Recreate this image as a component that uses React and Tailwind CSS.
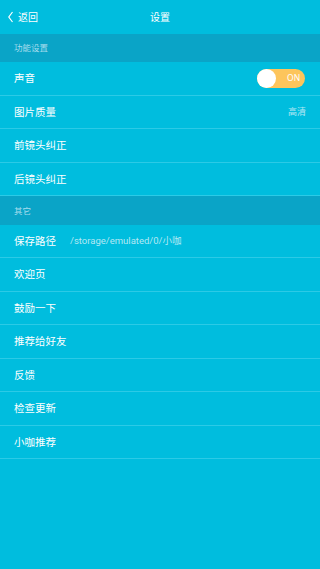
import React from "react";

const font = { fontFamily: '"Noto Sans CJK SC", "Noto Sans", sans-serif' };

function Row({ label, right, children }) {
  return (
    <div className="flex h-[33.5px] items-center border-b border-[#2ccae6] pl-[14px] pr-[14px]">
      <span className="text-[10.5px] text-white">{label}</span>
      {children}
      {right}
    </div>
  );
}

function Section({ title }) {
  return (
    <div className="flex h-[28.5px] items-center bg-[#0aa4c7] pl-[14px] text-[8.5px] text-[#a6dced]">
      {title}
    </div>
  );
}

export default function App() {
  return (
    <div className="h-[569px] w-[320px] bg-[#00bdde]" style={font}>
      <div className="relative flex h-[33.5px] items-center">
        <div className="flex items-center pl-[7px]">
          <svg width="8" height="12" viewBox="0 0 8 12" className="mt-[1px]">
            <path d="M5.5 1 L1.8 6 L5.5 11" fill="none" stroke="white" strokeWidth="1.2" />
          </svg>
          <span className="ml-[3px] text-[10px] text-white">返回</span>
        </div>
        <div className="absolute left-0 right-0 text-center text-[10px] text-white pointer-events-none">设置</div>
      </div>
      <Section title="功能设置" />
      <Row
        label="声音"
        right={
          <div className="ml-auto flex h-[19px] w-[48px] items-center rounded-full bg-[#fdc55c] mr-[1px]">
            <div className="h-[19px] w-[19px] rounded-full bg-white" />
            <span className="ml-[11px] text-[8.5px] text-white" style={{ fontFamily: '"Noto Sans", sans-serif' }}>ON</span>
          </div>
        }
      />
      <Row label="图片质量" right={<span className="ml-auto text-[9px] text-[#b5e8f4]">高清</span>} />
      <Row label="前镜头纠正" />
      <Row label="后镜头纠正" />
      <Section title="其它" />
      <Row label="保存路径">
        <span className="ml-[14px] text-[9.5px] text-[#b5e8f4]" style={{ fontFamily: '"Roboto", "Noto Sans CJK SC", sans-serif' }}>
          /storage/emulated/0/小咖
        </span>
      </Row>
      <Row label="欢迎页" />
      <Row label="鼓励一下" />
      <Row label="推荐给好友" />
      <Row label="反馈" />
      <Row label="检查更新" />
      <Row label="小咖推荐" />
    </div>
  );
}
